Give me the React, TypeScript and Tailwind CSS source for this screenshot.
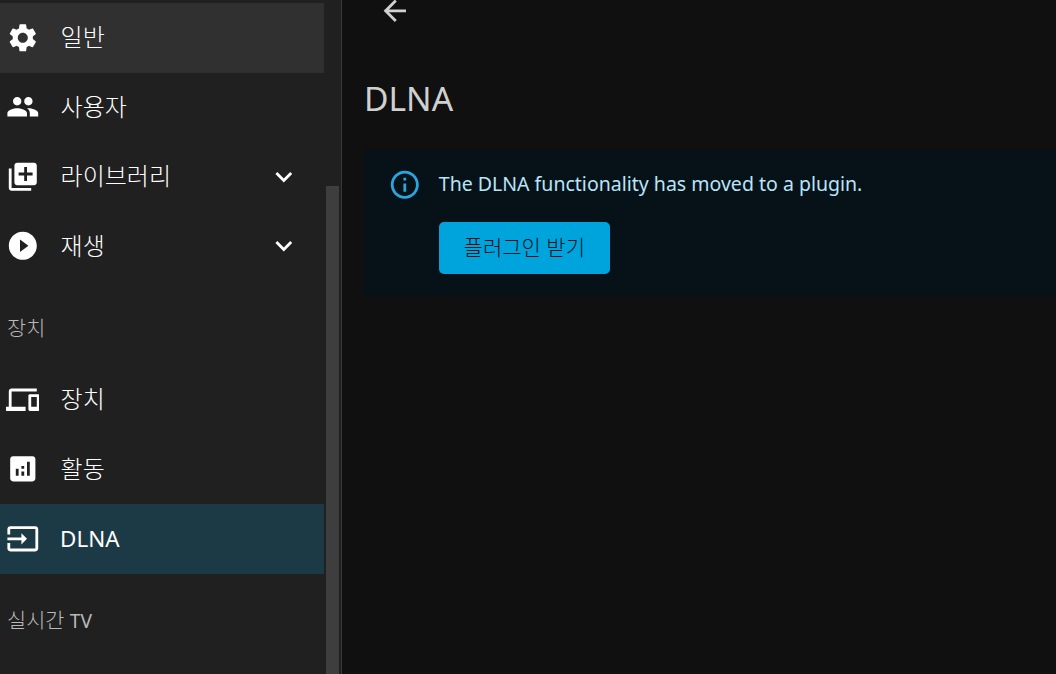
import type { ReactNode } from "react";

const FONT = "font-['Noto_Sans','Noto_Sans_CJK_KR',sans-serif]";

const ICONS = {
  settings:
    "M19.14 12.94c.04-.3.06-.61.06-.94 0-.32-.02-.64-.07-.94l2.03-1.58c.18-.14.23-.41.12-.61l-1.92-3.32c-.12-.22-.37-.29-.59-.22l-2.39.96c-.5-.38-1.03-.7-1.62-.94l-.36-2.54c-.04-.24-.24-.41-.48-.41h-3.84c-.24 0-.43.17-.47.41l-.36 2.54c-.59.24-1.13.57-1.62.94l-2.39-.96c-.22-.08-.47 0-.59.22L2.74 8.87c-.12.21-.08.47.12.61l2.03 1.58c-.05.3-.09.63-.09.94s.02.64.07.94l-2.03 1.58c-.18.14-.23.41-.12.61l1.92 3.32c.12.22.37.29.59.22l2.39-.96c.5.38 1.03.7 1.62.94l.36 2.54c.05.24.24.41.48.41h3.84c.24 0 .44-.17.47-.41l.36-2.54c.59-.24 1.13-.56 1.62-.94l2.39.96c.22.08.47 0 .59-.22l1.92-3.32c.12-.22.07-.47-.12-.61l-2.01-1.58zM12 15.6c-1.98 0-3.6-1.62-3.6-3.6s1.62-3.6 3.6-3.6 3.6 1.62 3.6 3.6-1.62 3.6-3.6 3.6z",
  people:
    "M16 11c1.66 0 2.99-1.34 2.99-3S17.66 5 16 5c-1.66 0-3 1.34-3 3s1.34 3 3 3zm-8 0c1.66 0 2.99-1.34 2.99-3S9.66 5 8 5C6.34 5 5 6.34 5 8s1.34 3 3 3zm0 2c-2.33 0-7 1.17-7 3.5V19h14v-2.5c0-2.33-4.67-3.5-7-3.5zm8 0c-.29 0-.62.02-.97.05 1.16.84 1.97 1.97 1.97 3.45V19h6v-2.5c0-2.33-4.67-3.5-7-3.5z",
  library:
    "M4 6H2v14c0 1.1.9 2 2 2h14v-2H4V6zm16-4H8c-1.1 0-2 .9-2 2v12c0 1.1.9 2 2 2h12c1.1 0 2-.9 2-2V4c0-1.1-.9-2-2-2zm-1 9h-4v4h-2v-4H9V9h4V5h2v4h4v2z",
  play: "M12 2C6.48 2 2 6.48 2 12s4.48 10 10 10 10-4.48 10-10S17.52 2 12 2zm-2 14.5v-9l6 4.5-6 4.5z",
  expand: "M16.59 8.59 12 13.17 7.41 8.59 6 10l6 6 6-6z",
  devices:
    "M4 6h18V4H4c-1.1 0-2 .9-2 2v11H0v3h14v-3H4V6zm19 2h-6c-.55 0-1 .45-1 1v10c0 .55.45 1 1 1h6c.55 0 1-.45 1-1V9c0-.55-.45-1-1-1zm-1 9h-4v-7h4v7z",
  analytics:
    "M19 3H5c-1.1 0-2 .9-2 2v14c0 1.1.9 2 2 2h14c1.1 0 2-.9 2-2V5c0-1.1-.9-2-2-2zM9 17H7v-5h2v5zm4 0h-2v-3h2v3zm0-5h-2v-2h2v2zm4 5h-2V7h2v10z",
  input:
    "M21 3.01H3c-1.1 0-2 .9-2 2V9h2V4.99h18v14.03H3V15H1v4.01c0 1.1.9 1.98 2 1.98h18c1.1 0 2-.88 2-1.98v-14c0-1.1-.9-2-2-2zM11 16l4-4-4-4v3H1v2h10v3z",
  info: "M11 7h2v2h-2zm0 4h2v6h-2zm1-9C6.48 2 2 6.48 2 12s4.48 10 10 10 10-4.48 10-10S17.52 2 12 2zm0 18c-4.41 0-8-3.59-8-8s3.59-8 8-8 8 3.59 8 8-3.59 8-8 8z",
  back: "M20 11H7.83l5.59-5.59L12 4l-8 8 8 8 1.41-1.41L7.83 13H20v-2z",
};

function Icon({ d, className }: { d: string; className: string }) {
  return (
    <svg viewBox="0 0 24 24" fill="currentColor" className={className}>
      <path d={d} />
    </svg>
  );
}

interface NavItemProps {
  icon: string;
  label: string;
  latin?: boolean;
  expandable?: boolean;
  tone?: "selected" | "active";
}

function NavItem({ icon, label, latin, expandable, tone }: NavItemProps) {
  const bg =
    tone === "selected"
      ? "bg-[#303030]"
      : tone === "active"
        ? "bg-[#1c3a46]"
        : "";
  return (
    <div className={`flex h-[69.5px] items-center pl-[5.5px] pr-[23px] ${bg}`}>
      <Icon d={icon} className="h-[33.6px] w-[33.6px] shrink-0 text-white" />
      <span
        className={
          latin
            ? "ml-[21px] flex-1 text-[22.4px] text-white"
            : "ml-[21.5px] flex-1 pb-[1px] text-[24px] font-light text-white"
        }
      >
        {label}
      </span>
      {expandable && <Icon d={ICONS.expand} className="h-[33.6px] w-[33.6px] text-white" />}
    </div>
  );
}

function SectionTitle({ children, className }: { children: ReactNode; className: string }) {
  return (
    <div className={`mt-[13px] mb-[1px] flex items-center pl-[7px] text-[20.8px] font-light text-[#b9b9b9] ${className}`}>
      <span>{children}</span>
    </div>
  );
}

export default function App() {
  return (
    <div className={`flex h-[674px] w-[1056px] overflow-hidden bg-[#101010] ${FONT}`}>
      <aside className="flex w-[342px] shrink-0 border-r border-[#383838] bg-[#202020]">
        <nav className="w-[324px] shrink-0 pt-[3px]">
          <NavItem icon={ICONS.settings} label="일반" tone="selected" />
          <NavItem icon={ICONS.people} label="사용자" />
          <NavItem icon={ICONS.library} label="라이브러리" expandable />
          <NavItem icon={ICONS.play} label="재생" expandable />
          <SectionTitle className="h-[70px]">장치</SectionTitle>
          <NavItem icon={ICONS.devices} label="장치" />
          <NavItem icon={ICONS.analytics} label="활동" />
          <NavItem icon={ICONS.input} label="DLNA" latin tone="active" />
          <SectionTitle className="h-[68px]">
            실시간 <span className="text-[19.2px] font-normal">TV</span>
          </SectionTitle>
        </nav>
        <div className="ml-[2px] w-[13px] pt-[186px]">
          <div className="h-full bg-[#3e3e3e]" />
        </div>
      </aside>
      <main className="min-w-0 flex-1 pl-[22px]">
        <Icon d={ICONS.back} className="ml-[14.4px] mt-[-5.8px] h-[33.6px] w-[33.6px] text-[#d0d0d0]" />
        <h1 className="mt-[48px] text-[33.6px] leading-[44px] text-[#d0d0d0]">DLNA</h1>
        <div className="mt-[30px] flex h-[146px] rounded-l-[4px] bg-[#061118] pl-[24px] pt-[18px]">
          <Icon d={ICONS.info} className="h-[33.6px] w-[33.6px] shrink-0 text-[#29a5e0]" />
          <div className="ml-[17.2px]">
            <p className="mt-[2px] text-[19.52px] leading-[27px] text-[#b8e5fa]">
              The DLNA functionality has moved to a plugin.
            </p>
            <button
              type="button"
              className="mt-[25px] h-[52px] w-[171px] rounded-[5px] bg-[#00a4dc] pb-[1px] text-[21px] font-light text-[#06141b]"
            >
              플러그인 받기
            </button>
          </div>
        </div>
      </main>
    </div>
  );
}
